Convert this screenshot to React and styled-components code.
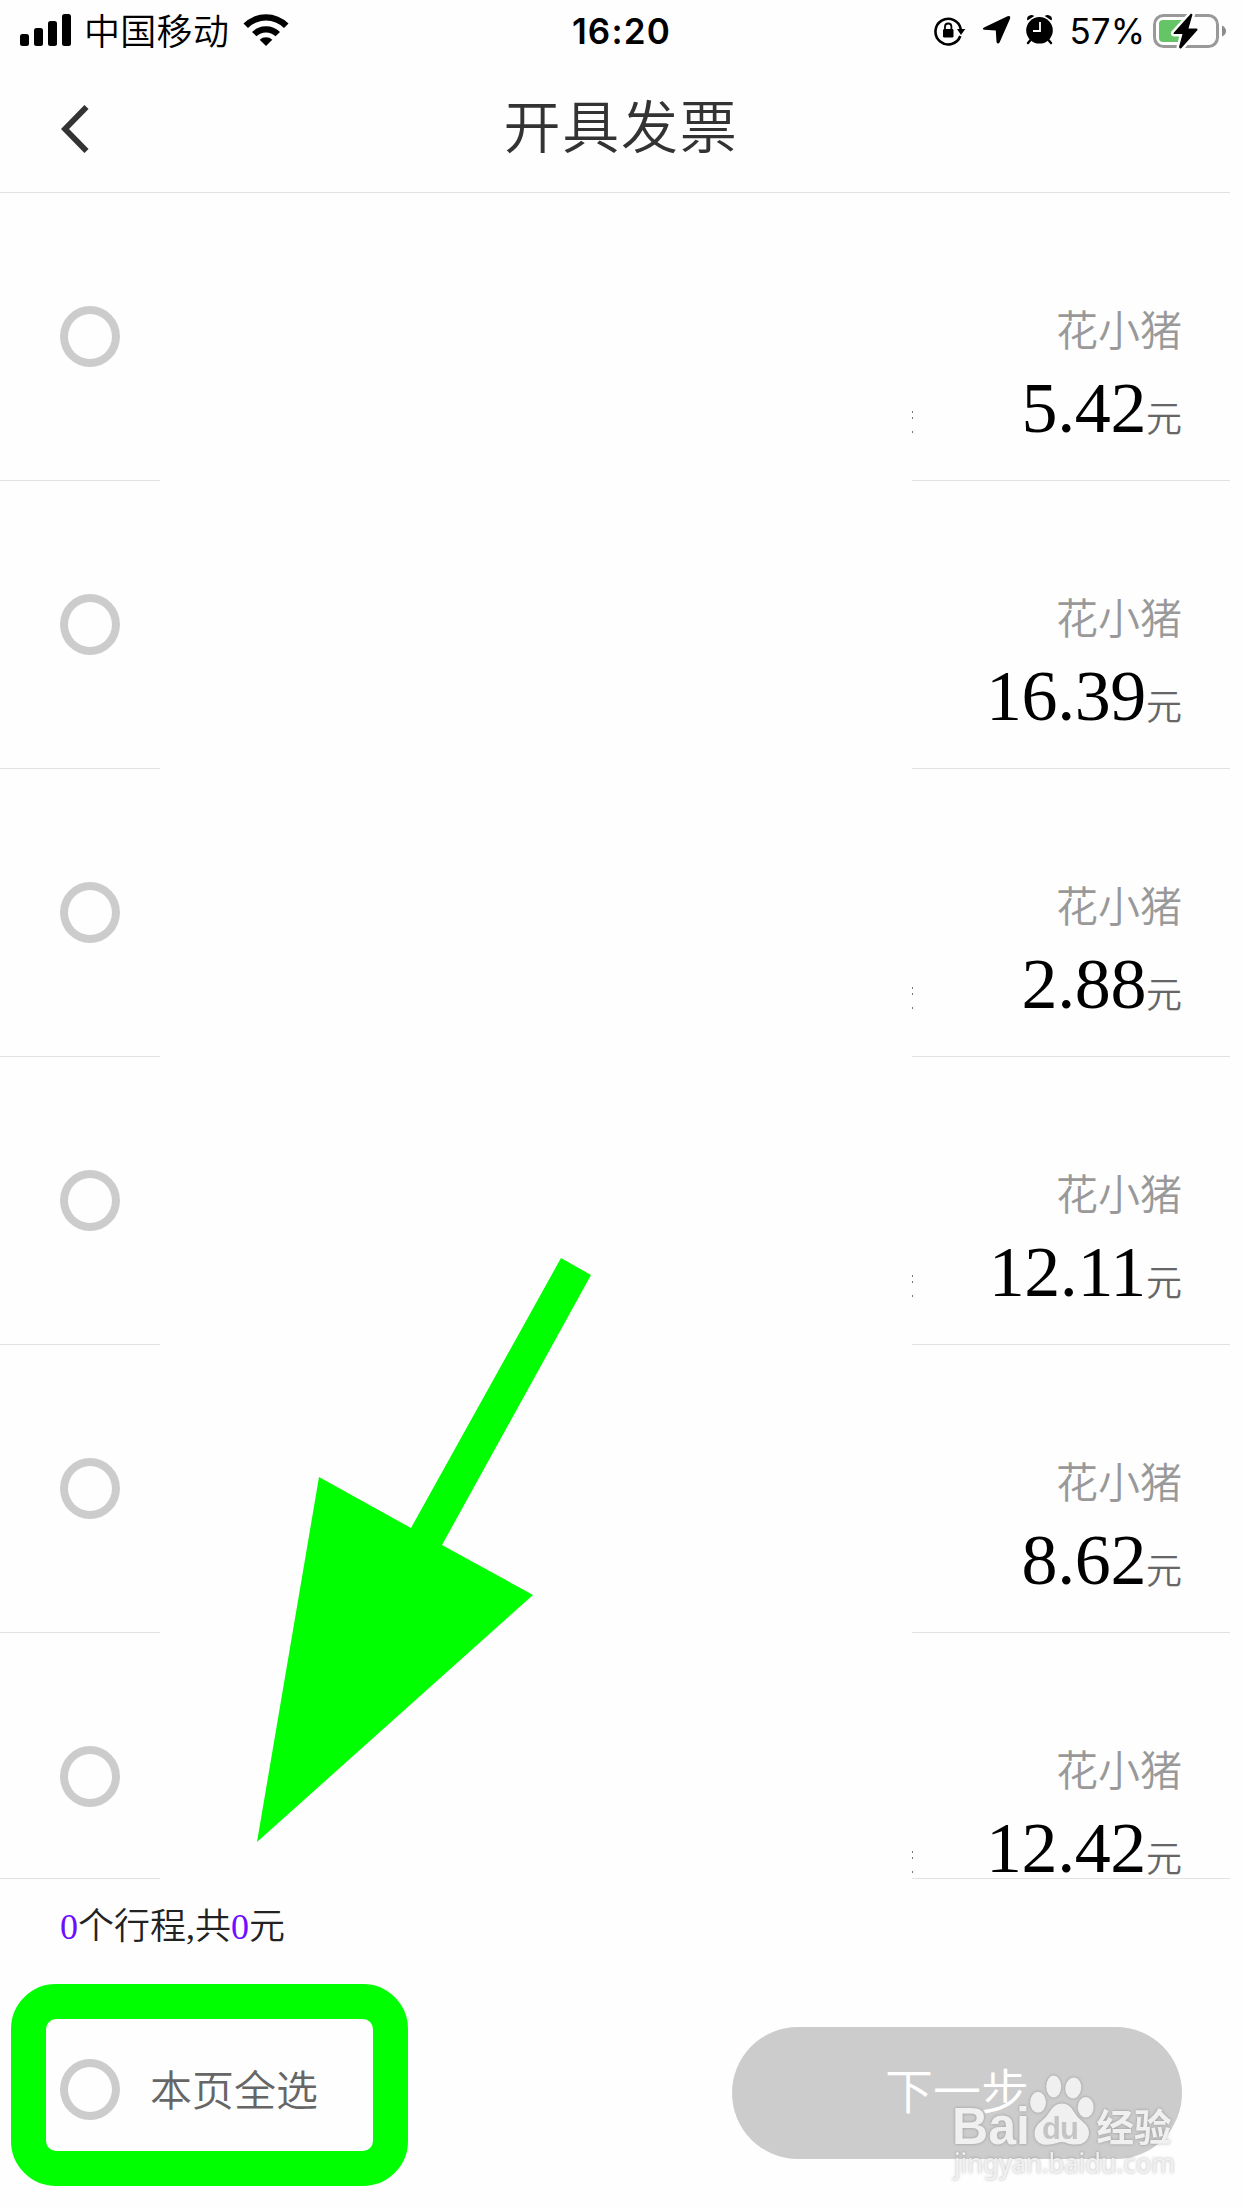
import React from "react";
import styled, { createGlobalStyle } from "styled-components";

const Global = createGlobalStyle`
  *{box-sizing:border-box}
  body{margin:0;background:#fefefe;font-family:"Liberation Sans","Noto Sans CJK SC",sans-serif;}
`;
const cjk = `"Noto Sans CJK SC",sans-serif`;

const Screen = styled.div`
  position:relative;width:1242px;height:2208px;overflow:hidden;
  display:flex;flex-direction:column;background:#fefefe;
`;
const StatusBar = styled.div`
  height:64px;flex:none;display:grid;grid-template-columns:1fr auto 1fr;align-items:center;
  padding:0 16px 0 20px;color:#000;
`;
const StatusSide = styled.div`
  display:flex;align-items:center;height:64px;justify-content:${p => (p.$end ? "flex-end" : "flex-start")};
`;
const Carrier = styled.span`
  font:350 36px/60px ${cjk};letter-spacing:.3px;margin:0 14px 6px 13px;
`;
const Clock = styled.span`font:600 35px/60px Inter,sans-serif;letter-spacing:1.2px;padding:0 3px 2px 0;`;
const Percent = styled.span`font:400 35px/60px Inter,sans-serif;margin:0 8px 2px 16px;`;
const Header = styled.header`
  height:129px;flex:none;width:1230px;border-bottom:1px solid #e2e2e2;
  display:grid;grid-template-columns:160px 1fr 148px;align-items:center;
`;
const Back = styled.button`
  border:0;background:none;padding:1px 0 0 61px;display:flex;
`;
const Title = styled.h1`
  margin:0;padding-bottom:10px;font:350 57px/80px ${cjk};letter-spacing:1.8px;color:#333;text-align:center;
`;
const Rides = styled.main`height:1685px;flex:none;overflow:hidden;`;
const Ride = styled.section`
  height:288px;width:1230px;display:grid;grid-template-columns:160px 752px 318px;
`;
const RideCheck = styled.div`
  display:flex;align-items:center;padding-left:60px;border-bottom:1px solid #e2e2e2;
`;
const RideFare = styled.div`
  border-bottom:1px solid #e2e2e2;display:flex;flex-direction:column;align-items:flex-end;
  padding:105px 48px 0 0;
`;
const Radio = styled.span`
  width:60px;height:61px;flex:none;border:8px solid #ccc;border-radius:50%;
`;
const Brand = styled.span`font:350 42px/60px ${cjk};color:#999;`;
const Amount = styled.span`
  font:400 72px/90px "Liberation Serif",serif;color:#000;margin-top:5px;display:flex;align-items:baseline;
`;
const Digits = styled.span`letter-spacing:-.4px;margin-right:0;`;
const Unit = styled.span`font:350 36px/50px ${cjk};color:#666;`;
const RideGap = styled.div`
  display:flex;justify-content:flex-end;align-items:flex-start;padding-top:217px;
`;
const Sliver = styled.svg`display:block;margin-right:-1px;`;
const Footer = styled.footer`
  flex:1;display:flex;flex-direction:column;position:relative;
`;
const FooterRule = styled.div`
  display:flex;justify-content:space-between;width:1230px;
  &::before,&::after{content:"";height:1px;background:#e2e2e2;width:160px;}
  &::after{width:318px;}
`;
const Summary = styled.div`
  font:350 36px/50px "Liberation Serif","Noto Sans CJK SC",serif;color:#222;padding:23px 0 0 60px;
`;
const Count = styled.span`color:#6e0dff;`;
const Actions = styled.div`
  display:flex;justify-content:space-between;align-items:center;width:1182px;height:132px;margin-top:75px;padding-left:60px;
`;
const SelectAll = styled.label`
  display:flex;align-items:center;gap:30px;font:350 42px/60px ${cjk};color:#666;padding-bottom:7px;
`;
const SelectText = styled.span`padding-bottom:3px;`;
const Next = styled.button`
  width:450px;height:132px;border:0;border-radius:66px;background:#ccc;color:#fff;
  font:350 48px/70px ${cjk};padding:0 0 10px;
`;
const Highlight = styled.div`
  position:absolute;left:11px;top:1984px;width:397px;height:202px;border:35px solid #0f0;border-radius:45px;
`;
const Arrow = styled.svg`position:absolute;left:257px;top:1258px;`;
const Watermark = styled.div`
  position:absolute;left:940px;top:2060px;width:250px;height:148px;
`;
const WatermarkArt = styled.svg`
  display:block;filter:drop-shadow(0 0 1.5px rgba(0,0,0,.27));
`;

const rides = [
  { fare: "5.42", mark: true },
  { fare: "16.39" },
  { fare: "2.88", mark: true },
  { fare: "12.11", mark: true },
  { fare: "8.62" },
  { fare: "12.42", mark: true },
];

const Signal = () => (
  <svg width="51" height="36" viewBox="0 0 51 36">
    <rect x="0" y="20" width="9" height="12" rx="2.5" />
    <rect x="14" y="14" width="9" height="18" rx="2.5" />
    <rect x="28" y="7" width="9" height="25" rx="2.5" />
    <rect x="42" y="0" width="9" height="32" rx="2.5" />
  </svg>
);

const Wifi = () => (
  <svg width="46" height="39" viewBox="0 0 46 39">
    <path d="M0.5 10.5 A32 32 0 0 1 45.5 10.5 L41 15 A25.5 25.5 0 0 0 5 15Z" />
    <path d="M9 19 A20 20 0 0 1 37 19 L32.5 23.3 A13.5 13.5 0 0 0 13.5 23.3Z" />
    <path d="M16.7 26.7 A9.5 9.5 0 0 1 29.3 26.7 L23 33Z" />
  </svg>
);

const StatusIcons = () => (
  <svg width="120" height="34" viewBox="0 0 120 34">
    <path d="M26.3 20 A12.8 12.8 0 1 1 26.8 13" transform="translate(0 1)" fill="none" stroke="#000" strokeWidth="2.6" />
    <path d="M23 14 L31.3 14 L27 20Z" />
    <rect x="9" y="14" width="10.5" height="8.6" rx="1.4" />
    <path d="M11 15 V11.7 A3.2 3.2 0 0 1 17.4 11.7 V15" fill="none" stroke="#000" strokeWidth="1.8" />
    <path d="M50 12.4 L73.5 1.3 Q77 0 76 3.8 L65.8 27 Q64 30 62.5 27 L61.8 15.5 L50.5 14.8 Q47.5 14 50 12.4Z" />
    <circle cx="105.5" cy="15.3" r="13.3" />
    <path d="M93.5 5.4 Q92 2 95.5 .5 Q98 -.5 100.3 1.1Z M110.7 1.1 Q113 -.5 115.5 .5 Q119 2 117.5 5.4Z" />
    <path d="M96.5 25 L94 28 M114.5 25 L117 28" stroke="#000" strokeWidth="2.4" strokeLinecap="round" />
    <path d="M106 7 V16 H99" fill="none" stroke="#fff" strokeWidth="1.8" />
  </svg>
);

const Battery = () => (
  <svg width="73" height="38" viewBox="0 0 73 38">
    <rect x="1.5" y="2.5" width="63" height="31" rx="9" fill="none" stroke="#999" strokeWidth="3" />
    <path d="M69 12.5 Q73 14.5 73 18 Q73 21.5 69 23.5Z" fill="#8c8c8c" />
    <rect x="6" y="7" width="28" height="22" rx="4" fill="#65c466" />
    <path d="M38 .5 L20.5 20 Q20 21 21.5 21 H29.5 L26 34 Q27 36.5 28.5 35 L44.5 17 Q45 15.5 43.5 15.5 H35.5 L39.5 1.5Z" fill="#000" stroke="#fefefe" strokeWidth="5" paintOrder="stroke" />
  </svg>
);

export default function App() {
  return (
    <Screen>
      <Global />
      <StatusBar>
        <StatusSide><Signal /><Carrier>中国移动</Carrier><Wifi /></StatusSide>
        <Clock>16:20</Clock>
        <StatusSide $end><StatusIcons /><Percent>57%</Percent><Battery /></StatusSide>
      </StatusBar>
      <Header>
        <Back>
          <svg width="28" height="48" viewBox="0 0 28 48"><path d="M25.5 2 L4 24 L25.5 46" fill="none" stroke="#333" strokeWidth="5.8" /></svg>
        </Back>
        <Title>开具发票</Title>
      </Header>
      <Rides>
        {rides.map(r => (
          <Ride key={r.fare}>
            <RideCheck><Radio /></RideCheck>
            <RideGap>
              {r.mark && (
                <Sliver width="1" height="24"><path d="M0 1h1v2H0zM0 7h1v2H0zM0 21h1v2H0z" fill="#777" /></Sliver>
              )}
            </RideGap>
            <RideFare>
              <Brand>花小猪</Brand>
              <Amount><Digits>{r.fare}</Digits><Unit>元</Unit></Amount>
            </RideFare>
          </Ride>
        ))}
      </Rides>
      <Footer>
        <FooterRule />
        <Summary><Count>0</Count>个行程,共<Count>0</Count>元</Summary>
        <Actions>
          <SelectAll><Radio /><SelectText>本页全选</SelectText></SelectAll>
          <Next>下一步</Next>
        </Actions>
      </Footer>
      <Arrow width="335" height="586" viewBox="0 0 335 586">
        <path d="M304 0 L334 17 L185 287 L276 337 L0 584 L62 219 L154 270Z" fill="#0f0" />
      </Arrow>
      <Highlight />
      <Watermark>
        <WatermarkArt width="250" height="148" viewBox="0 0 250 148">
          <g fill="#f0f0f0">
            <text x="12" y="83.5" fontFamily="Liberation Sans" fontWeight="700" fontSize="51" textLength="78" lengthAdjust="spacingAndGlyphs">Bai</text>
            <ellipse cx="98" cy="42.3" rx="8" ry="10.5" />
            <ellipse cx="113.7" cy="26.5" rx="7.5" ry="11" />
            <ellipse cx="133.3" cy="28" rx="8" ry="10.5" transform="rotate(8 133.3 28)" />
            <ellipse cx="145.7" cy="47.3" rx="8" ry="10.3" />
            <path d="M109.5 52 Q114 43.5 122 43.5 Q130 43.5 134 52 Q137 57.5 143 62 Q149.5 67 149 74.5 Q147 84.5 136 84.5 Q129 84.5 125.5 82.5 Q121 81.5 117 83 Q110 85.5 103 84.5 Q94 82 94.5 73 Q95 66 101 61.5 Q106 58 109.5 52Z" />
            <text x="156.5" y="81" fontFamily="Noto Sans CJK SC" fontWeight="700" fontSize="37.5">经验</text>
            <text x="14" y="112.500" fontFamily="Noto Sans" fontSize="27" textLength="221" lengthAdjust="spacingAndGlyphs">jingyan.baidu.com</text>
          </g>
          <text x="102" y="78.5" fontFamily="Liberation Sans" fontSize="31" textLength="37" fill="#c4c4c4" fontWeight="700">du</text>
        </WatermarkArt>
      </Watermark>
    </Screen>
  );
}
